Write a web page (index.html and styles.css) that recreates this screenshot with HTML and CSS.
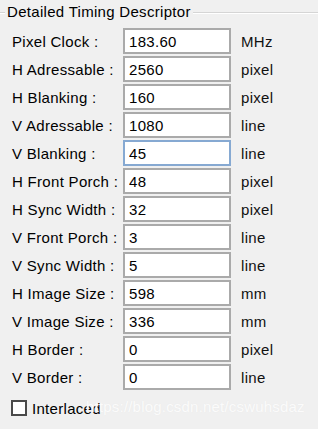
FILE: index.html
```html
<!DOCTYPE html>
<html>
<head>
    <title>Detailed Timing Descriptor</title>
    <link rel="stylesheet" href="styles.css">
</head>
<body>
    <div class="group">
        <div class="group-title">
            <span class="edge-left"></span>
            <span class="title-text">Detailed Timing Descriptor</span>
            <span class="edge-right"></span>
        </div>

        <!-- Timing fields -->
        <div class="rows">
            <div class="row"><label>Pixel Clock :</label><input class="field" value="183.60"><span class="unit">MHz</span></div>
            <div class="row"><label>H Adressable :</label><input class="field" value="2560"><span class="unit">pixel</span></div>
            <div class="row"><label>H Blanking :</label><input class="field" value="160"><span class="unit">pixel</span></div>
            <div class="row"><label>V Adressable :</label><input class="field" value="1080"><span class="unit">line</span></div>
            <div class="row"><label>V Blanking :</label><input class="field focused" value="45"><span class="unit">line</span></div>
            <div class="row"><label>H Front Porch :</label><input class="field" value="48"><span class="unit">pixel</span></div>
            <div class="row"><label>H Sync Width :</label><input class="field" value="32"><span class="unit">pixel</span></div>
            <div class="row"><label>V Front Porch :</label><input class="field" value="3"><span class="unit">line</span></div>
            <div class="row"><label>V Sync Width :</label><input class="field" value="5"><span class="unit">line</span></div>
            <div class="row"><label>H Image Size :</label><input class="field" value="598"><span class="unit">mm</span></div>
            <div class="row"><label>V Image Size :</label><input class="field" value="336"><span class="unit">mm</span></div>
            <div class="row"><label>H Border :</label><input class="field" value="0"><span class="unit">pixel</span></div>
            <div class="row"><label>V Border :</label><input class="field" value="0"><span class="unit">line</span></div>
        </div>

        <div class="check-row">
            <span class="checkbox"></span>
            <span class="check-label">Interlaced</span>
        </div>
    </div>

    <div class="watermark">https://blog.csdn.net/cswuhsdaz</div>
</body>
</html>
```

FILE: styles.css
```css
body {
    margin: 0;
    width: 318px;
    height: 429px;
    background-color: #f0f0f0;
    font-family: "Liberation Sans", Arial, sans-serif;
    font-size: 15px;
    letter-spacing: 0.3px;
    color: #000;
    position: relative;
    overflow: hidden;
}
.group-title {
    display: flex;
    align-items: center;
    height: 25px;
    padding-top: 0;
}
.edge-left {
    width: 5px;
    border-top: 1px solid #d5d5d5;
    border-bottom: 1px solid #fff;
}
.edge-right {
    flex: 1;
    border-top: 1px solid #d5d5d5;
    border-bottom: 1px solid #fff;
}
.title-text {
    padding: 0 2px 1px 2px;
    line-height: 18px;
}
.rows {
    display: flex;
    flex-direction: column;
    gap: 2px;
    margin-top: 3px;
}
.row {
    display: flex;
    align-items: center;
    height: 26px;
}
.row label {
    width: 111px;
    padding-left: 12px;
}
.field {
    box-sizing: border-box;
    width: 108px;
    height: 26px;
    margin: 0;
    border: 2px solid #aaaaaa;
    background: #fff;
    font-family: inherit;
    font-size: 15px;
    letter-spacing: 0.3px;
    padding: 0 0 0 4px;
    color: #000;
    outline: none;
}
.field.focused {
    border-color: #86a9d2;
}
.unit {
    margin-left: 10px;
    color: #111;
}
.check-row {
    display: flex;
    align-items: center;
    margin-top: 10px;
    padding-left: 11px;
    height: 16px;
}
.checkbox {
    box-sizing: border-box;
    width: 16px;
    height: 16px;
    border: 2px solid #4a4a4a;
    background: #fff;
}
.check-label {
    margin-left: 5px;
}
.watermark {
    position: absolute;
    left: 86px;
    top: 398px;
    font-size: 15px;
    letter-spacing: 0.2px;
    color: #fbfbfb;
    text-shadow: 0 0 1px #e6e6e6;
}
```
